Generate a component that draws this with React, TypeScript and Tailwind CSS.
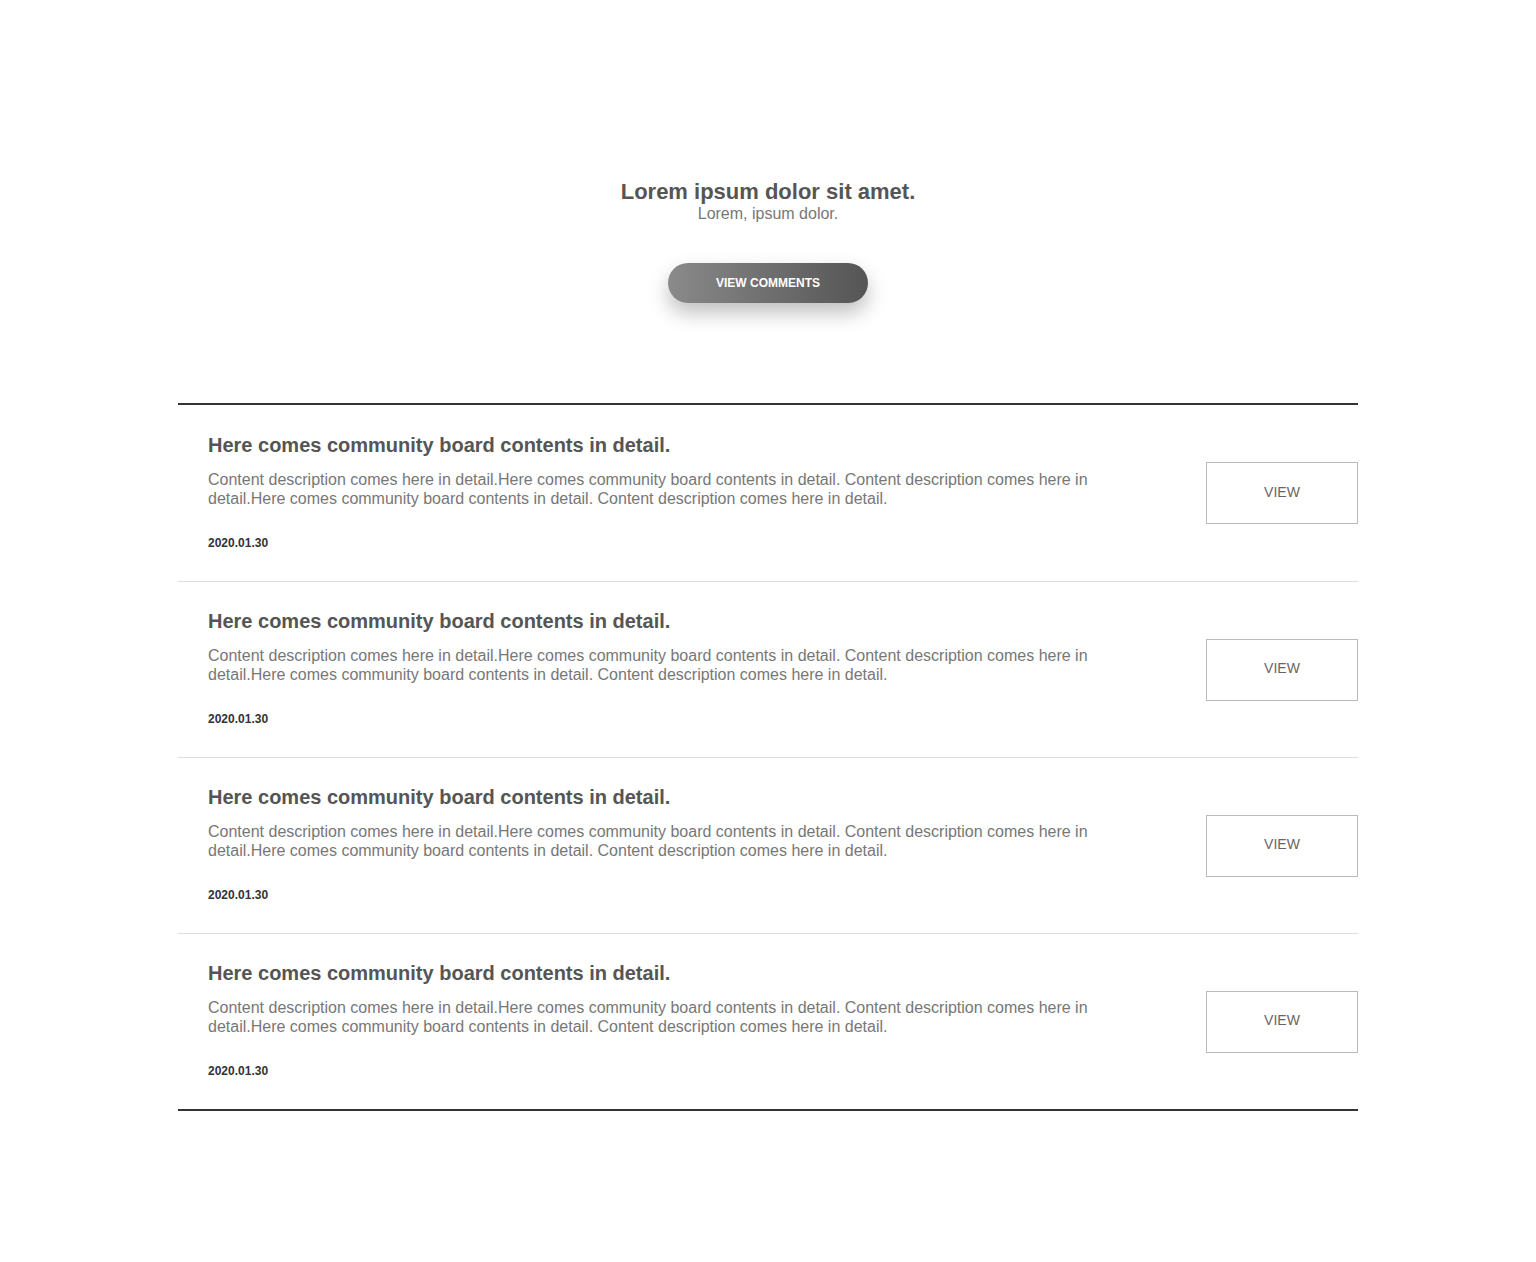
const posts = [1, 2, 3, 4].map((id) => ({
  id,
  title: 'Here comes community board contents in detail.',
  body:
    'Content description comes here in detail.Here comes community board contents in detail. Content description comes here in detail.Here comes community board contents in detail. Content description comes here in detail.',
  date: '2020.01.30',
}));

const App = () => {
  return (
    <div className="min-h-[1262px] bg-white font-['Liberation_Sans',Arial,sans-serif]">
      <section className="pt-[179px] flex flex-col items-center">
        <h1 className="text-[22px] leading-[25px] font-bold text-[#555]">Lorem ipsum dolor sit amet.</h1>
        <p className="mt-[1px] text-[16px] leading-[18px] text-[#777]">Lorem, ipsum dolor.</p>
        <button className="mt-[40px] w-[200px] h-[40px] rounded-full bg-gradient-to-r from-[#8a8a8a] to-[#555] text-white text-[12px] font-bold shadow-[0_10px_20px_rgba(0,0,0,0.25)]">
          VIEW COMMENTS
        </button>
      </section>

      <ul className="mx-auto mt-[100px] w-[1180px] border-t-2 border-b-2 border-[#333]">
        {posts.map((post, i) => (
          <li
            key={post.id}
            className={`flex items-center justify-between pl-[30px] ${i > 0 ? 'border-t border-[#ddd]' : ''}`}
          >
            <div className={`${i > 0 ? 'pt-[28px]' : 'pt-[29px]'} pb-[31px]`}>
              <h2 className="text-[20px] leading-[23px] font-bold text-[#555]">{post.title}</h2>
              <p className="mt-[13px] w-[890px] text-[16px] leading-[19px] text-[#777]">{post.body}</p>
              <span className="block mt-[28px] text-[12px] leading-[14px] font-bold text-[#333]">{post.date}</span>
            </div>
            <button className="w-[152px] h-[62px] pb-[2px] border border-[#bbb] text-[14px] text-[#666]">VIEW</button>
          </li>
        ))}
      </ul>
    </div>
  );
};

export default App;
